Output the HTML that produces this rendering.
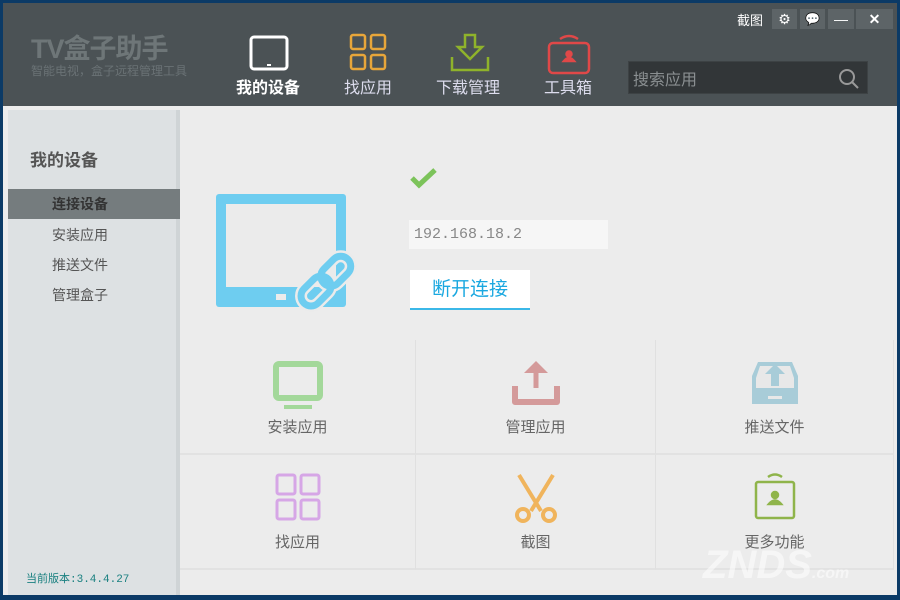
<!DOCTYPE html>
<html><head><meta charset="utf-8"><style>
*{margin:0;padding:0;box-sizing:border-box}
body{width:900px;height:600px;background:#0b3a66;position:relative;overflow:hidden;font-family:"Liberation Sans","Noto Sans CJK SC",sans-serif}
.win{position:absolute;left:3px;top:3px;width:894px;height:592px;background:#ececec}
.hdr{position:absolute;left:0;top:0;width:894px;height:103px;background:#4b5255}
.abs{position:absolute}
.nav{position:absolute;top:71px;font-size:16px;color:#dde;text-align:center;width:80px}
.side{position:absolute;left:5px;top:107px;width:172px;height:485px;background:#dde1e3;border-right:4px solid #cfd4d6}
.si{position:absolute;left:0;width:172px;height:30px;font-size:14px;color:#555;padding-left:44px;line-height:30px}
.cell{position:absolute;width:236px;height:115px;border-right:1px solid #e0e0e0;border-bottom:2px solid #e2e2e2}
.cell span{position:absolute;top:76px;width:100%;text-align:center;font-size:15px;color:#666}
.cell svg{position:absolute;left:50%;margin-left:-27px;top:18px}
.tb{position:absolute;top:6px;height:20px;background:#5d6467;color:#fff;font-size:14px;text-align:center;line-height:20px}
</style></head><body>
<div class="win">
<div class="hdr">
 <div class="abs" style="left:28px;top:24px;font-size:27px;font-weight:bold;color:#6e7678;letter-spacing:-1px">TV盒子助手</div>
 <div class="abs" style="left:28px;top:59px;font-size:12px;color:#6a7275">智能电视，盒子远程管理工具</div>
 <svg class="abs" style="left:246px;top:32px" width="40" height="36"><rect x="2" y="2" width="36" height="32" rx="3" fill="none" stroke="#fff" stroke-width="3"/><rect x="18" y="29" width="4" height="2" fill="#fff"/></svg>
 <div class="nav" style="left:225px;color:#fff;font-weight:bold">我的设备</div>
 <svg class="abs" style="left:346px;top:30px" width="38" height="38" fill="none" stroke="#e8a63a" stroke-width="2.5"><rect x="2" y="2" width="14" height="14" rx="2"/><rect x="22" y="2" width="14" height="14" rx="2"/><rect x="2" y="22" width="14" height="14" rx="2"/><rect x="22" y="22" width="14" height="14" rx="2"/></svg>
 <div class="nav" style="left:325px">找应用</div>
 <svg class="abs" style="left:447px;top:30px" width="40" height="40" fill="none" stroke="#8fb32b" stroke-width="2.5"><path d="M15 2h10v12h7L20 26 8 14h7z"/><path d="M2 24v13h36V24"/></svg>
 <div class="nav" style="left:425px">下载管理</div>
 <svg class="abs" style="left:544px;top:30px" width="44" height="42" fill="none" stroke="#e04848" stroke-width="2.5"><path d="M13 6q9-6 18 0"/><rect x="2" y="10" width="40" height="30" rx="4"/><circle cx="22" cy="21" r="2.5" fill="#e04848"/><path d="M17 28q5-6 10 0z" fill="#e04848"/></svg>
 <div class="nav" style="left:525px">工具箱</div>
 <div class="abs" style="left:625px;top:58px;width:240px;height:33px;background:#323638;border:1px solid #3d4244"></div>
 <div class="abs" style="left:630px;top:63px;font-size:16px;color:#8a8f91">搜索应用</div>
 <svg class="abs" style="left:835px;top:65px" width="22" height="22" fill="none" stroke="#999" stroke-width="2"><circle cx="9" cy="9" r="7"/><path d="M14 14l6 6"/></svg>
 <div class="abs" style="left:734px;top:7px;font-size:13px;color:#fff">截图</div>
 <div class="tb" style="left:769px;width:25px">⚙</div>
 <div class="tb" style="left:797px;width:25px;font-size:12px">💬</div>
 <div class="tb" style="left:825px;width:26px">—</div>
 <div class="tb" style="left:853px;width:37px;font-weight:bold">✕</div>
</div>
<div class="side">
 <div class="abs" style="left:22px;top:36px;font-size:17px;font-weight:bold;color:#555">我的设备</div>
 <div class="si" style="top:79px;background:#757c7e;color:#333;font-weight:bold">连接设备</div>
 <div class="si" style="top:110px">安装应用</div>
 <div class="si" style="top:140px">推送文件</div>
 <div class="si" style="top:170px">管理盒子</div>
 <div class="abs" style="left:18px;top:460px;font-size:11px;color:#1a8080;font-family:'Liberation Mono','Noto Sans CJK SC',monospace">当前版本:3.4.4.27</div>
</div>
<svg class="abs" style="left:213px;top:191px" width="152" height="118"><rect x="0" y="0" width="130" height="113" rx="3" fill="#6ecdf0"/><rect x="10" y="10" width="110" height="83" fill="#ebebeb"/><rect x="60" y="100" width="10" height="6" fill="#ebebeb"/><g transform="rotate(-45 112 85)" fill="none" stroke="#ebebeb" stroke-width="12"><rect x="78" y="75" width="34" height="20" rx="10"/><rect x="106" y="75" width="34" height="20" rx="10"/></g><g transform="rotate(-45 112 85)" fill="none" stroke="#6ecdf0" stroke-width="7"><rect x="78" y="75" width="34" height="20" rx="10"/><rect x="106" y="75" width="34" height="20" rx="10"/></g></svg>
<svg class="abs" style="left:407px;top:164px" width="28" height="22"><path d="M2 11l7 7L25 3" fill="none" stroke="#7cc35a" stroke-width="5"/></svg>
<div class="abs" style="left:406px;top:217px;width:199px;height:29px;background:#f6f6f6;font-family:'Liberation Mono',monospace;font-size:15px;color:#888;padding:5px 5px;line-height:19px">192.168.18.2</div>
<div class="abs" style="left:407px;top:267px;width:120px;height:40px;background:#fff;border-bottom:2px solid #3bb8e8;font-size:19px;color:#1aa8e0;text-align:center;line-height:40px">断开连接</div>
<div class="cell" style="left:177px;top:337px"><svg width="54" height="60"><rect x="5" y="6" width="44" height="34" rx="3" fill="none" stroke="#a3d89a" stroke-width="6"/><rect x="13" y="47" width="28" height="4" fill="#a3d89a"/></svg><span>安装应用</span></div>
<div class="cell" style="left:413px;top:337px;width:240px"><svg width="54" height="60"><path d="M6 28v16h42V28" fill="none" stroke="#d49a9a" stroke-width="6" stroke-linejoin="round"/><path d="M27 30V10" stroke="#d49a9a" stroke-width="5"/><path d="M15 15L27 3l12 12z" fill="#d49a9a"/></svg><span>管理应用</span></div>
<div class="cell" style="left:653px;top:337px;width:238px"><svg width="54" height="60"><path d="M10 4h34l6 14v28H4V18z" fill="#a8ccd8"/><path d="M12 8h30l4 12H8z" fill="#e8e8e8"/><path d="M8 20h38v10H8z" fill="#e8e8e8"/><path d="M27 6l10 10h-6v12h-8V16h-6z" fill="#a8ccd8"/><rect x="20" y="38" width="14" height="3" fill="#e8e8e8"/></svg><span>推送文件</span></div>
<div class="cell" style="left:177px;top:452px"><svg width="54" height="60" fill="none" stroke="#d6a6e6" stroke-width="3"><rect x="6" y="2" width="18" height="19" rx="2"/><rect x="30" y="2" width="18" height="19" rx="2"/><rect x="6" y="27" width="18" height="19" rx="2"/><rect x="30" y="27" width="18" height="19" rx="2"/></svg><span>找应用</span></div>
<div class="cell" style="left:413px;top:452px;width:240px"><svg width="54" height="60" fill="none" stroke="#f0b45c" stroke-width="4"><path d="M10 2l22 36M44 2L22 38"/><circle cx="14" cy="42" r="6"/><circle cx="40" cy="42" r="6"/></svg><span>截图</span></div>
<div class="cell" style="left:653px;top:452px;width:238px"><svg width="54" height="60" fill="none" stroke="#8fb44a" stroke-width="2.5"><path d="M20 4q7-5 14 0"/><rect x="8" y="9" width="38" height="36" rx="2"/><circle cx="27" cy="22" r="3" fill="#8fb44a"/><path d="M21 31q6-7 12 0z" fill="#8fb44a"/></svg><span>更多功能</span></div>
<div class="abs" style="left:700px;top:540px;font-size:40px;font-weight:bold;font-style:italic;color:rgba(255,255,255,0.55)">ZNDS<span style="font-size:16px">.com</span></div>
</div>
</body></html>
